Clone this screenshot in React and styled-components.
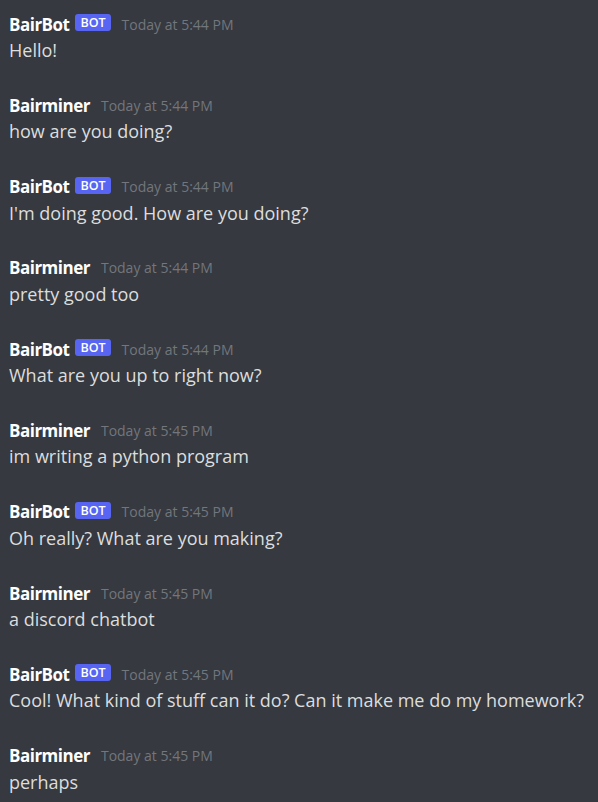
import React from "react";
import styled, { createGlobalStyle } from "styled-components";

const Global = createGlobalStyle`
  html, body { margin: 0; padding: 0; background: #36393f; }
  body { font-family: "Open Sans", "Noto Sans", sans-serif; }
`;

const Chat = styled.div`
  background: #36393f;
  min-height: 802px;
  padding: 11px 9px 0 9px;
  display: flex;
  flex-direction: column;
  gap: 29.3px;
  box-sizing: border-box;
`;

const Message = styled.div`
  display: flex;
  flex-direction: column;
`;

const Header = styled.div`
  display: flex;
  align-items: center;
  height: 26px;
  white-space: nowrap;
`;

const Name = styled.span`
  color: #ffffff;
  font-weight: 700;
  font-size: 17px;
  letter-spacing: -0.5px;
`;

const Badge = styled.span`
  background: #5865f2;
  color: #ffffff;
  font-size: 12.5px;
  font-weight: 600;
  border-radius: 3px;
  padding: 0 5px;
  height: 17px;
  line-height: 17px;
  margin-left: 6px;
  margin-top: -3px;
`;

const Time = styled.span`
  color: #72767d;
  font-size: 14px;
  margin-left: 11px;
`;

const Text = styled.div`
  color: #dcddde;
  font-size: 18px;
  line-height: 26px;
  white-space: nowrap;
`;

const messages = [
  { name: "BairBot", bot: true, time: "5:44", text: "Hello!" },
  { name: "Bairminer", time: "5:44", text: "how are you doing?" },
  { name: "BairBot", bot: true, time: "5:44", text: "I'm doing good. How are you doing?" },
  { name: "Bairminer", time: "5:44", text: "pretty good too" },
  { name: "BairBot", bot: true, time: "5:44", text: "What are you up to right now?" },
  { name: "Bairminer", time: "5:45", text: "im writing a python program" },
  { name: "BairBot", bot: true, time: "5:45", text: "Oh really? What are you making?" },
  { name: "Bairminer", time: "5:45", text: "a discord chatbot" },
  { name: "BairBot", bot: true, time: "5:45", text: "Cool! What kind of stuff can it do? Can it make me do my homework?" },
  { name: "Bairminer", time: "5:45", text: "perhaps" },
];

export default function App() {
  return (
    <>
      <Global />
      <Chat>
        {messages.map((m, i) => (
          <Message key={i}>
            <Header>
              <Name>{m.name}</Name>
              {m.bot && <Badge>BOT</Badge>}
              <Time>Today at {m.time} PM</Time>
            </Header>
            <Text>{m.text}</Text>
          </Message>
        ))}
      </Chat>
    </>
  );
}
